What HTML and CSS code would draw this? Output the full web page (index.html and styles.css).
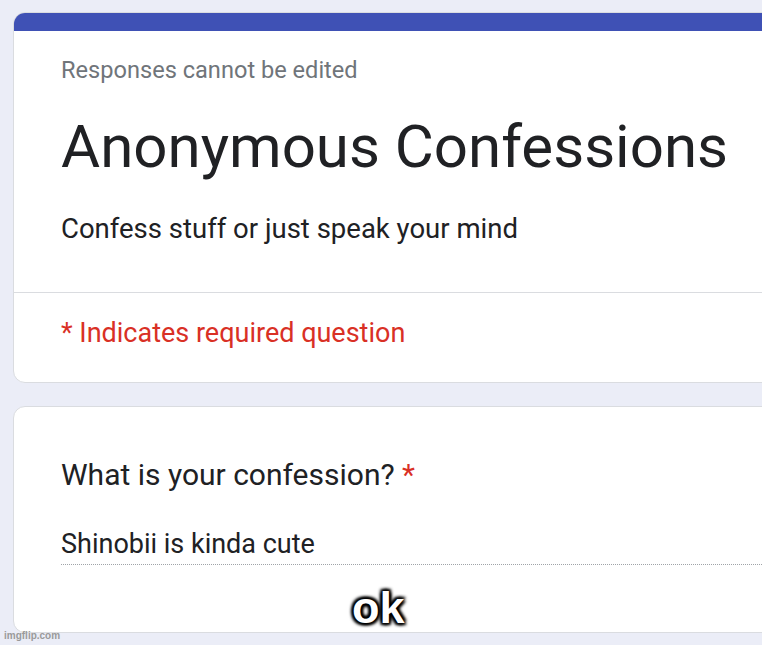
FILE: index.html
```html
<!DOCTYPE html>
<html>
<head>
<meta charset="utf-8">
<link rel="stylesheet" href="styles.css">
</head>
<body>
<div class="page">
  <div class="card header-card">
    <div class="topbar"></div>
    <div class="header-main">
      <div class="note">Responses cannot be edited</div>
      <h1 class="title">Anonymous Confessions</h1>
      <div class="desc">Confess stuff or just speak your mind</div>
    </div>
    <div class="header-foot">
      <div class="required">* Indicates required question</div>
    </div>
  </div>
  <div class="card question-card">
    <div class="question">What is your confession? <span class="star">*</span></div>
    <div class="answer">Shinobii is kinda cute</div>
  </div>
</div>
<div class="caption">ok</div>
<div class="watermark">imgflip.com</div>
</body>
</html>
```
FILE: styles.css
```css
html, body {
  margin: 0;
  padding: 0;
}
body {
  width: 762px;
  height: 645px;
  overflow: hidden;
  background: #ebedf7;
  font-family: Roboto, "Liberation Sans", sans-serif;
  color: #202124;
  position: relative;
}
.page {
  padding: 12px 0 0 13px;
  display: flex;
  flex-direction: column;
  gap: 23px;
  width: 749px;
  overflow: hidden;
}
.card {
  width: 820px;
  flex-shrink: 0;
  background: #fff;
  border: 1px solid #dadce0;
  border-radius: 12px;
  box-sizing: border-box;
}
.header-card {
  height: 371px;
  overflow: hidden;
  display: flex;
  flex-direction: column;
}
.topbar {
  height: 19px;
  flex-shrink: 0;
  background: #3f51b5;
  margin: -1px -1px 0 -1px;
}
.header-main {
  padding: 25px 0 0 47px;
  height: 262px;
  flex-shrink: 0;
  box-sizing: border-box;
  border-bottom: 1px solid #dadce0;
}
.note {
  font-size: 23.6px;
  color: #70757a;
  line-height: 28px;
}
.title {
  margin: 28px 0 0 0;
  font-size: 60px;
  font-weight: 400;
  line-height: 70px;
  white-space: nowrap;
}
.desc {
  margin-top: 31px;
  font-size: 27.5px;
  line-height: 32px;
}
.header-foot {
  padding: 24px 0 0 47px;
}
.required {
  color: #d93025;
  font-size: 27px;
  line-height: 32px;
}
.question-card {
  height: 227px;
  padding: 50px 0 0 47px;
}
.question {
  font-size: 30px;
  line-height: 36px;
}
.star {
  color: #d93025;
}
.answer {
  margin-top: 36px;
  font-size: 27px;
  line-height: 30px;
  padding-bottom: 5px;
  border-bottom: 1px dotted #a0a4a8;
}
.caption {
  position: absolute;
  left: 352px;
  top: 585px;
  font-family: "Liberation Sans", Arial, sans-serif;
  font-weight: 700;
  font-size: 45px;
  line-height: 45px;
  color: #fff;
  text-shadow: -2px -2px 3px #000, 2px -2px 3px #000, -2px 2px 3px #000, 2px 2px 3px #000, 0 0 3px #000, 0 0 5px #000;
}
.watermark {
  position: absolute;
  left: 4px;
  top: 630px;
  font-family: "Liberation Sans", Arial, sans-serif;
  font-weight: 700;
  font-size: 10px;
  color: #9a9a9a;
}
```
